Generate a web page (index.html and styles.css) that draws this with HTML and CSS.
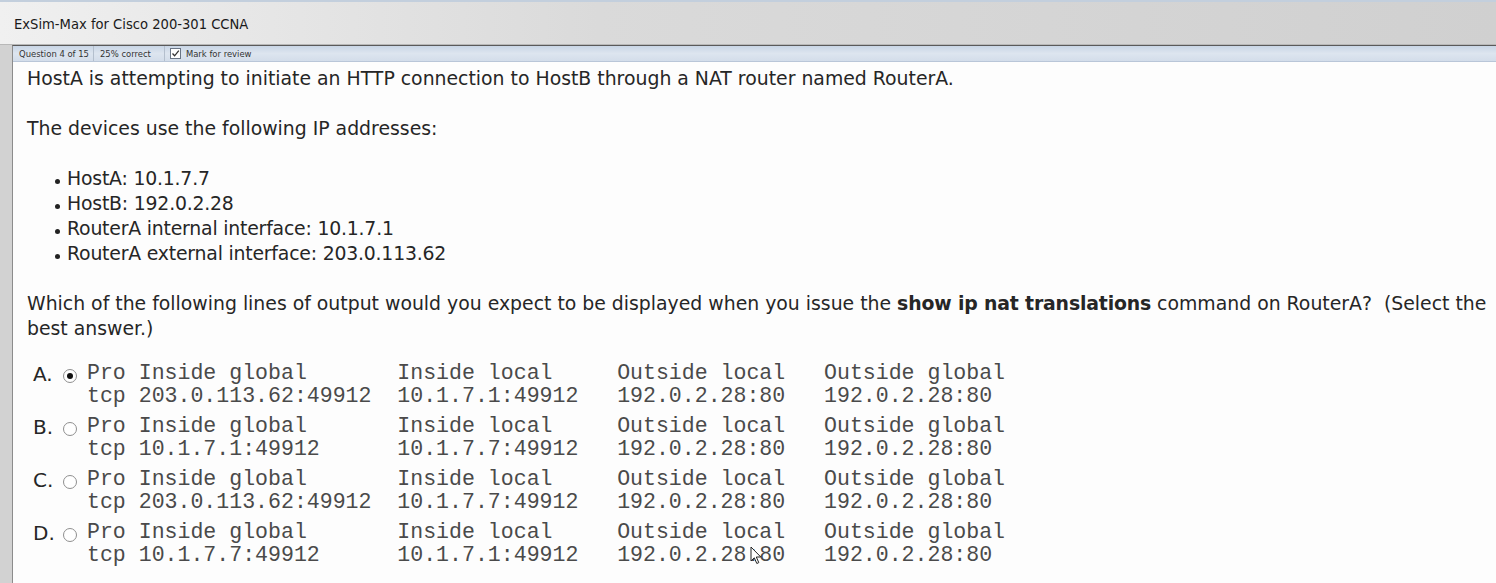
FILE: index.html
```html
<!DOCTYPE html>
<html>
<head>
<meta charset="utf-8">
<link rel="stylesheet" href="styles.css">
</head>
<body>
<div class="app">
  <header class="titlebar"><span class="title">ExSim-Max for Cisco 200-301 CCNA</span></header>
  <div class="main">
    <div class="side"></div>
    <div class="panel">
      <div class="toolbar">
        <span class="tb-item">Question 4 of 15</span>
        <span class="tb-item">25% correct</span>
        <span class="tb-item tb-check"><span class="checkbox"><svg width="9" height="9" viewBox="0 0 9 9"><path d="M1.5 4.5 L3.6 6.8 L7.8 1.6" fill="none" stroke="#333" stroke-width="1.3"/></svg></span>Mark for review</span>
        <span class="tb-fill"></span>
      </div>
      <div class="content">
        <p class="line">HostA is attempting to initiate an HTTP connection to HostB through a NAT router named RouterA.</p>
        <p class="line gap">The devices use the following IP addresses:</p>
        <ul class="list">
          <li>HostA: 10.1.7.7</li>
          <li>HostB: 192.0.2.28</li>
          <li>RouterA internal interface: 10.1.7.1</li>
          <li>RouterA external interface: 203.0.113.62</li>
        </ul>
        <p class="line gap">Which of the following lines of output would you expect to be displayed when you issue the <b class="cmd">show ip nat translations</b> command on RouterA?&nbsp; (Select the<br>best answer.)</p>
        <div class="options">
          <div class="option">
            <span class="letter">A.</span><span class="radio checked"></span>
            <pre class="out">Pro Inside global       Inside local     Outside local   Outside global
tcp 203.0.113.62:49912  10.1.7.1:49912   192.0.2.28:80   192.0.2.28:80</pre>
          </div>
          <div class="option">
            <span class="letter">B.</span><span class="radio"></span>
            <pre class="out">Pro Inside global       Inside local     Outside local   Outside global
tcp 10.1.7.1:49912      10.1.7.7:49912   192.0.2.28:80   192.0.2.28:80</pre>
          </div>
          <div class="option">
            <span class="letter">C.</span><span class="radio"></span>
            <pre class="out">Pro Inside global       Inside local     Outside local   Outside global
tcp 203.0.113.62:49912  10.1.7.7:49912   192.0.2.28:80   192.0.2.28:80</pre>
          </div>
          <div class="option">
            <span class="letter">D.</span><span class="radio"></span>
            <pre class="out">Pro Inside global       Inside local     Outside local   Outside global
tcp 10.1.7.7:49912      10.1.7.1:49912   192.0.2.28:80   192.0.2.28:80</pre>
            <svg class="cursor" width="12" height="19" viewBox="0 0 12 19"><path d="M1 1 L1 15 L4.3 11.8 L6.8 17.5 L8.8 16.6 L6.3 11 L10.8 11 Z" fill="#fff" stroke="#222" stroke-width="1"/></svg>
          </div>
        </div>
      </div>
    </div>
  </div>
</div>
</body>
</html>
```
FILE: styles.css
```css
html, body {
  margin: 0;
  padding: 0;
  height: 100%;
  overflow: hidden;
}
body {
  background: #d4d4d4;
  font-family: "DejaVu Sans", sans-serif;
  color: #222;
}
.app {
  display: flex;
  flex-direction: column;
  height: 583px;
}
.titlebar {
  height: 41px;
  border-top: 2px solid #c3cfdd;
  background: linear-gradient(to right, #f0f0f0 0%, #dadada 40%, #d0d0d0 100%);
  display: flex;
  align-items: center;
  padding-left: 14px;
  padding-top: 1px;
  border-bottom: 1px solid #b8b8b8;
}
.title {
  font-size: 14.6px;
  color: #1a1a1a;
  font-family: "DejaVu Sans Condensed", sans-serif;
}
.main {
  flex: 1;
  display: flex;
  min-height: 0;
}
.side {
  width: 12px;
  background: #d2d2d2;
}
.panel {
  flex: 1;
  display: flex;
  flex-direction: column;
  border-left: 1px solid #8c8c8c;
  border-top: 1px solid #5a5a5a;
  background: #fdfdfd;
}
.toolbar {
  height: 15px;
  display: flex;
  align-items: stretch;
  background: linear-gradient(to bottom, #c9d6e6 0%, #dde5ef 50%, #d3ddea 100%);
  border-bottom: 1px solid #b9c6d8;
  font-size: 9.4px;
  color: #333;
  font-family: "DejaVu Sans Condensed", sans-serif;
}
.tb-item {
  display: flex;
  align-items: center;
  padding: 0 4px 0 6px;
  border-right: 1px solid #b4bfcd;
}
.tb-item:nth-child(2) {
  padding-right: 13px;
}
.tb-check {
  gap: 5px;
  padding-left: 5px;
  border-right: none;
}
.checkbox {
  width: 9px;
  height: 9px;
  border: 1px solid #6a7585;
  background: #fff;
  display: flex;
  align-items: center;
  justify-content: center;
}
.tb-fill { flex: 1; }
.content {
  flex: 1;
  padding: 4px 0 0 14px;
  font-size: 18.85px;
  line-height: 25px;
  color: #262626;
}
.line {
  margin: 0;
}
.gap {
  margin-top: 25px;
}
.cmd {
  letter-spacing: -0.15px;
}
.list {
  margin: 25px 0 0 0;
  padding: 0 0 0 40px;
  list-style: none;
}
.list li {
  position: relative;
  letter-spacing: -0.2px;
}
.list li::before {
  content: "";
  position: absolute;
  left: -12px;
  top: 13px;
  width: 5px;
  height: 5px;
  border-radius: 50%;
  background: #222;
}
.options {
  margin-top: 20px;
  display: flex;
  flex-direction: column;
  gap: 6px;
}
.option {
  position: relative;
  display: flex;
  align-items: flex-start;
}
.letter {
  width: 36px;
  padding-left: 6px;
  box-sizing: border-box;
  line-height: 23px;
  padding-top: 2px;
  font-size: 20px;
}
.radio {
  width: 12px;
  height: 12px;
  border: 1px solid #8f8f8f;
  border-radius: 50%;
  margin-top: 8px;
  margin-right: 10px;
  background: #fff;
  position: relative;
  flex: none;
}
.radio.checked::after {
  content: "";
  position: absolute;
  left: 3px;
  top: 3px;
  width: 6px;
  height: 6px;
  border-radius: 50%;
  background: #111;
}
.out {
  margin: 0;
  font-family: "Liberation Mono", monospace;
  font-size: 21.55px;
  line-height: 23px;
  padding-top: 1px;
  color: #4a4a4a;
}
.cursor {
  position: absolute;
  left: 723px;
  top: 26px;
}
```
